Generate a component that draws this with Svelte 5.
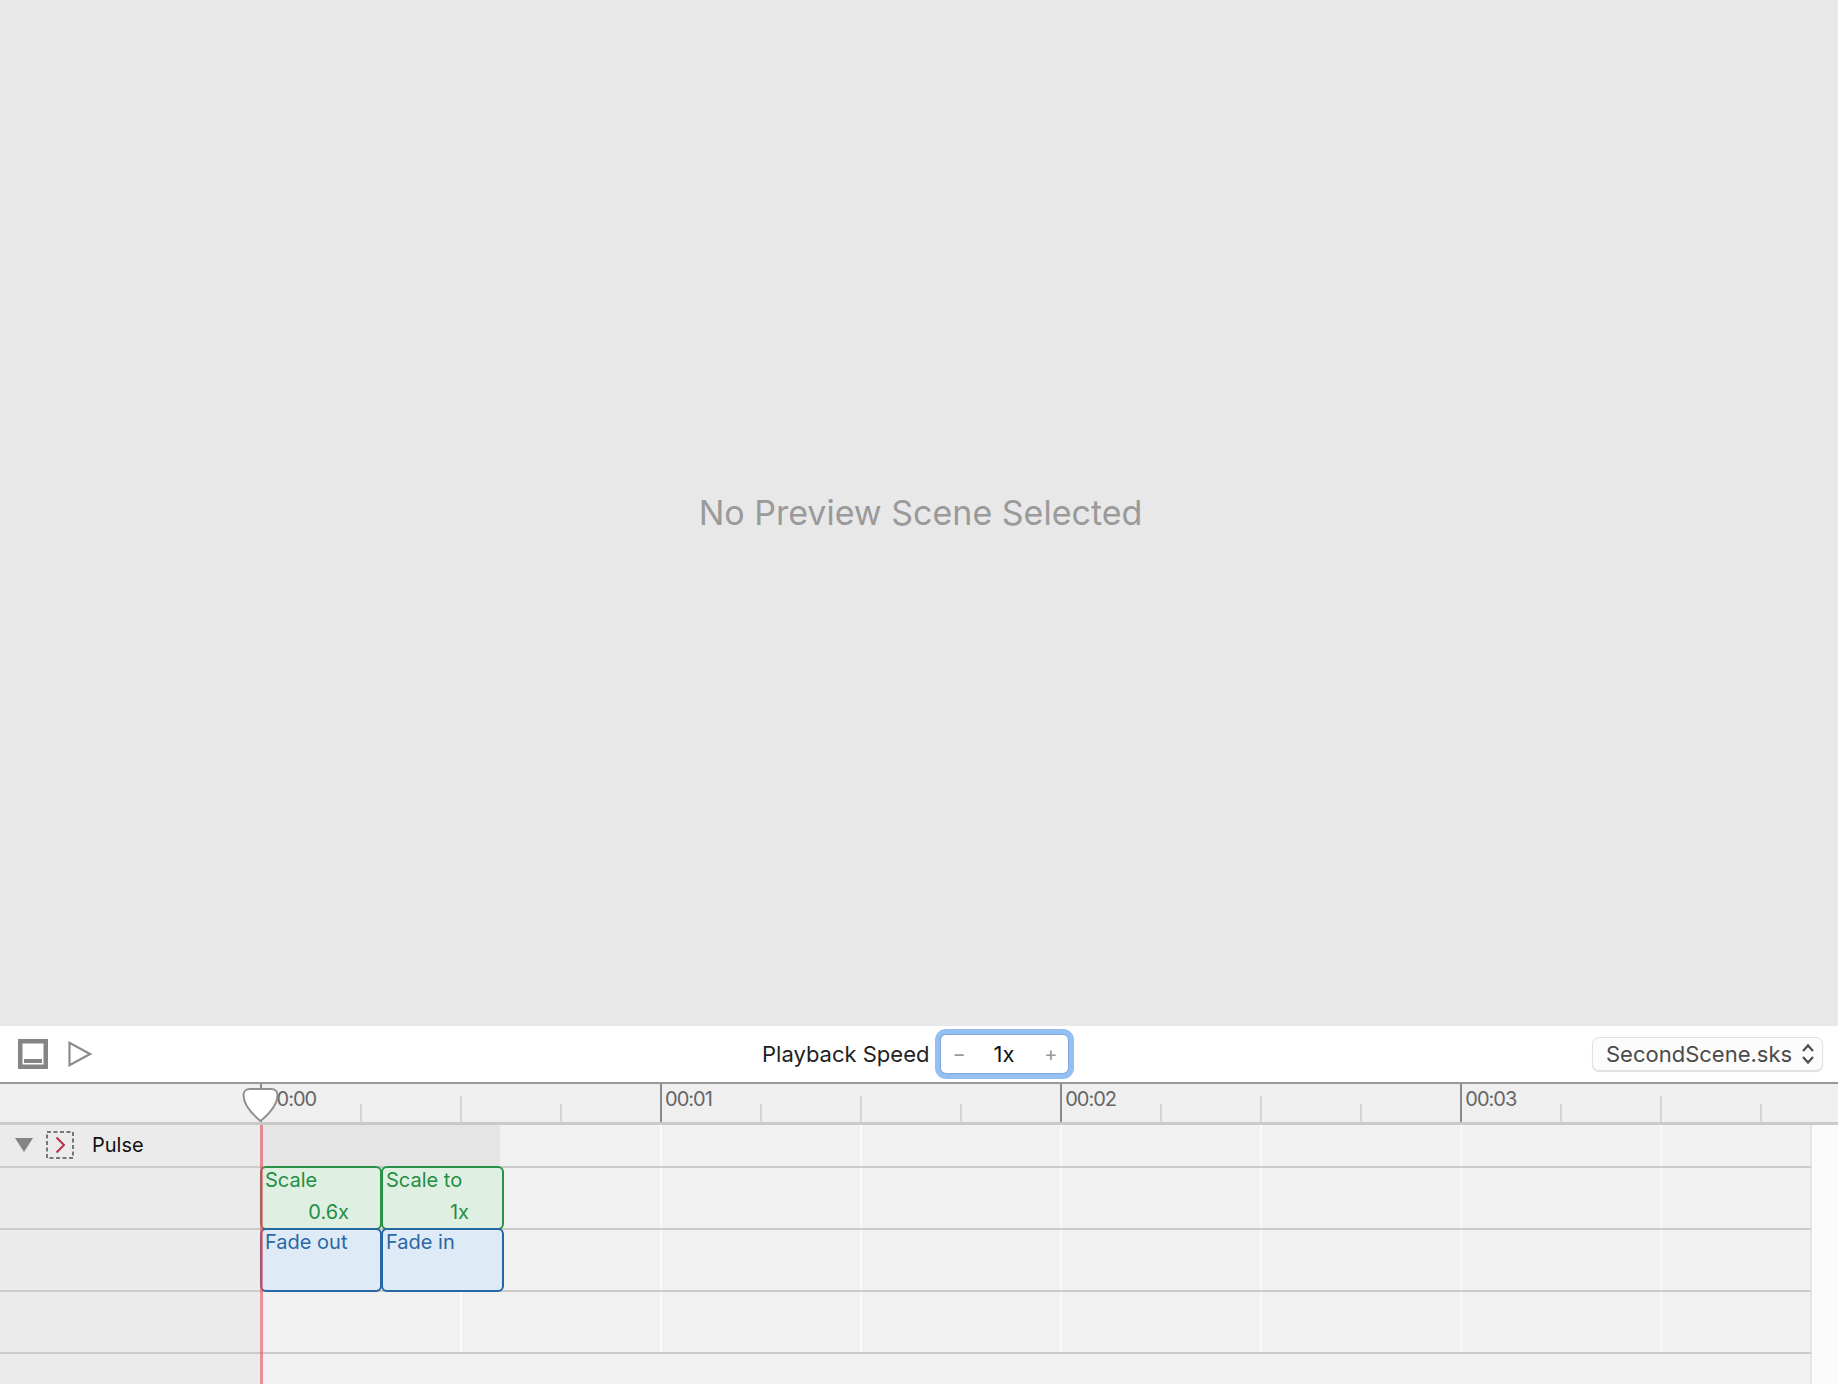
<script>
	// one second on the timeline is about 400px wide
	const secondWidth = 400.1;
	const seconds = ['00:00', '00:01', '00:02', '00:03'];
	const subTicks = [
		{ at: 0.25, long: false },
		{ at: 0.5, long: true },
		{ at: 0.75, long: false }
	];
	const scaleClips = [
		{ title: 'Scale', value: '0.6x' },
		{ title: 'Scale to', value: '1x' }
	];
	const fadeClips = [{ title: 'Fade out' }, { title: 'Fade in' }];
</script>

<div class="page">
	<div class="preview">No Preview Scene Selected</div>

	<div class="toolbar">
		<div class="tools">
			<svg width="30" height="30" viewBox="0 0 30 30">
				<rect x="2.25" y="2.25" width="25.5" height="25.5" fill="none" stroke="#858585" stroke-width="4.5" />
				<rect x="6" y="20" width="18" height="4" fill="#858585" />
			</svg>
			<svg class="play" width="24" height="26" viewBox="0 0 24 26">
				<path d="M1.5 1.8V24.2L22 13Z" fill="none" stroke="#8c8c8c" stroke-width="2.2" />
			</svg>
		</div>
		<div class="speed">
			<span>Playback Speed</span>
			<div class="stepper">
				<span class="step">−</span>
				<span class="value">1x</span>
				<span class="step">+</span>
			</div>
		</div>
		<div class="popup">
			<span>SecondScene.sks</span>
			<svg width="14" height="24" viewBox="0 0 14 24">
				<path d="M2 9L7 3.5L12 9M2 15L7 20.5L12 15" fill="none" stroke="#4d4d4d" stroke-width="2.2" />
			</svg>
		</div>
	</div>

	<div class="ruler">
		{#each seconds as label, i}
			<div class="tick major" style="left: {260 + i * secondWidth}px"></div>
			<span class="time" style="left: {260 + i * secondWidth + 5}px">{label}</span>
			{#each subTicks as sub}
				<div class="tick" class:long={sub.long} style="left: {260 + (i + sub.at) * secondWidth}px"></div>
			{/each}
		{/each}
		<svg class="handle" width="37" height="36" viewBox="0 0 37 36">
			<path d="M8 2H29C33 2 35.500 4.500 35.500 8C35.500 18 27 27 18.500 34C10 27 1.500 18 1.500 8C1.500 4.500 4 2 8 2Z" fill="#fff" stroke="#8f8f8f" stroke-width="2" />
		</svg>
	</div>

	<div class="tracks">
		<div class="row first">
			<div class="label">
				<svg width="18" height="14" viewBox="0 0 18 14"><path d="M0 0H18L9 14Z" fill="#858585" /></svg>
				<svg class="action" width="28" height="28" viewBox="0 0 28 28">
					<rect x="1" y="1" width="26" height="26" fill="none" stroke="#777" stroke-width="2" stroke-dasharray="4 2.500" />
					<path d="M10.500 6.500L18 14L10.500 21.500" fill="none" stroke="#b9304d" stroke-width="2" />
				</svg>
				<span>Pulse</span>
			</div>
			<div class="lane"><div class="selected"></div></div>
		</div>
		<div class="row">
			<div class="label"></div>
			<div class="lane">
				{#each scaleClips as clip}
					<div class="clip green">
						<span>{clip.title}</span>
						<span class="clip-value">{clip.value}</span>
					</div>
				{/each}
			</div>
		</div>
		<div class="row">
			<div class="label"></div>
			<div class="lane">
				{#each fadeClips as clip}
					<div class="clip blue"><span>{clip.title}</span></div>
				{/each}
			</div>
		</div>
		<div class="row">
			<div class="label"></div>
			<div class="lane"></div>
		</div>
		<div class="rest">
			<div class="label"></div>
			<div class="lane empty"></div>
		</div>
		<div class="playhead"></div>
	</div>
</div>

<style>
	:global(body) {
		margin: 0;
	}

	.page {
		height: 1384px;
		display: flex;
		flex-direction: column;
		background: #e8e8e8;
		font-family: Inter, "Liberation Sans", sans-serif;
		overflow: hidden;
	}

	.preview {
		height: 1026px;
		flex-shrink: 0;
		box-sizing: border-box;
		padding-left: 3px;
		padding-bottom: 2px;
		display: flex;
		align-items: center;
		justify-content: center;
		font-size: 34px;
		color: #9a9a9a;
	}

	.toolbar {
		height: 58px;
		flex-shrink: 0;
		box-sizing: border-box;
		background: #fff;
		border-bottom: 2px solid #999;
		display: grid;
		grid-template-columns: 744px auto 1fr;
		align-items: center;
		padding: 0 15px 0 18px;
	}

	.tools {
		display: flex;
		align-items: center;
		gap: 20px;
	}

	.speed {
		display: flex;
		align-items: center;
		gap: 12px;
		font-size: 22px;
		color: #222;
	}

	.stepper {
		width: 127px;
		height: 38px;
		box-sizing: border-box;
		background: #fff;
		border-radius: 5px;
		box-shadow: 0 0 0 1px #7fa9dc, 0 0 0 6px #93bff2;
		display: flex;
		align-items: center;
		justify-content: space-between;
		padding: 0 11px;
		color: #111;
	}

	.step {
		color: #999;
		font-size: 20px;
	}

	.value {
		font-size: 22px;
		margin-right: 2px;
	}

	.popup {
		justify-self: end;
		width: 231px;
		height: 34px;
		box-sizing: border-box;
		border: 1px solid #e2e2e2;
		border-radius: 7px;
		background: #fcfcfc;
		box-shadow: 0 1px 1px #dedede;
		display: flex;
		align-items: center;
		justify-content: space-between;
		padding: 0 7px 0 13px;
		font-size: 22px;
		color: #4b4b4b;
	}

	.ruler {
		height: 41px;
		flex-shrink: 0;
		box-sizing: border-box;
		background: #efefef;
		border-bottom: 3px solid #cacaca;
		position: relative;
	}

	.tick {
		position: absolute;
		bottom: 0;
		width: 1.500px;
		height: 18px;
		background: #d4d4d4;
	}

	.tick.long {
		height: 26px;
	}

	.tick.major {
		height: 38px;
		background: #8a8a8a;
	}

	.time {
		position: absolute;
		top: 2px;
		font-size: 20px;
		line-height: 26px;
		letter-spacing: -1px;
		color: #666;
	}

	.handle {
		position: absolute;
		left: 242px;
		top: 3px;
	}

	.tracks {
		flex: 1;
		position: relative;
		display: flex;
		flex-direction: column;
		background: #fafafa;
	}

	.row {
		height: 62px;
		box-sizing: border-box;
		display: flex;
		width: 1812px;
		border-right: 2px solid #e6e6e6;
		border-bottom: 2px solid #cbcbcb;
	}

	.row.first {
		height: 43px;
	}

	.rest {
		flex: 1;
		display: flex;
		width: 1812px;
		border-right: 2px solid #e6e6e6;
		box-sizing: border-box;
	}

	.label {
		width: 260px;
		flex-shrink: 0;
		box-sizing: border-box;
		background: #ebebeb;
		display: flex;
		align-items: center;
		padding: 0 0 1px 15px;
		font-size: 20px;
		color: #111;
	}

	.action {
		margin: 0 18px 0 13px;
	}

	.lane {
		flex: 1;
		display: flex;
		background-color: #f1f1f1;
		/* white grid line every half second */
		background-image: linear-gradient(to right, #fbfbfb 2px, transparent 2px);
		background-size: 200.05px 100%;
	}

	.lane.empty {
		background-image: none;
	}

	.selected {
		width: 240px;
		background: #e5e5e5;
	}

	.clip {
		position: relative;
		width: 122px;
		height: 64px;
		margin: -2px -1px 0 0;
		flex-shrink: 0;
		box-sizing: border-box;
		border: 2px solid;
		border-radius: 6px;
		padding: 0 0 0 3px;
		display: flex;
		flex-direction: column;
		font-size: 20px;
		line-height: 24px;
	}

	.clip:last-child {
		width: 123px;
	}

	.clip-value {
		align-self: flex-end;
		margin: 8px 31px 0 0;
	}

	.clip:last-child .clip-value {
		margin-right: 33px;
	}

	.green {
		background: #dff0e2;
		border-color: #2a9148;
		color: #1f8e45;
	}

	.blue {
		background: #deeaf5;
		border-color: #2767a3;
		color: #2a68a6;
	}

	.playhead {
		position: absolute;
		left: 260px;
		top: 0;
		bottom: 0;
		width: 3px;
		background: rgba(226, 80, 96, 0.62);
		z-index: 2;
	}
</style>
